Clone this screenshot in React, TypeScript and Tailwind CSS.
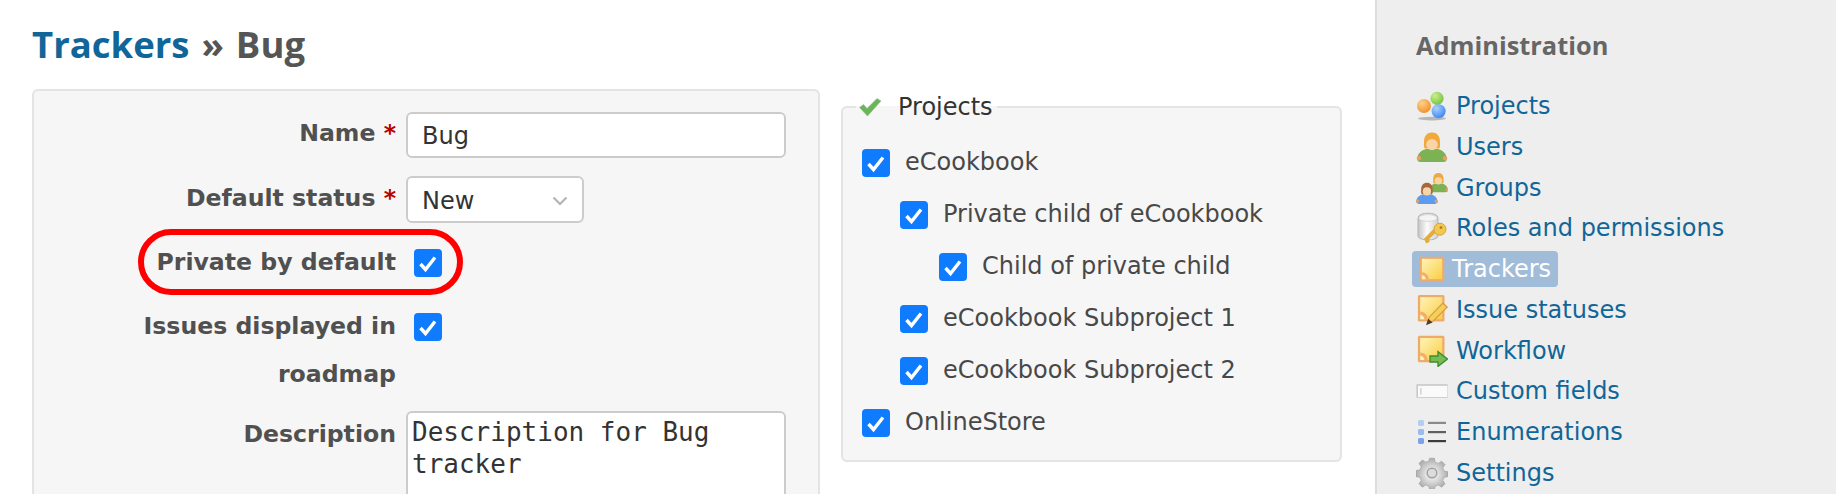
const SANS = "font-['DejaVu_Sans',Verdana,sans-serif]";

function Defs() {
  return (
    <svg width="0" height="0" className="absolute">
      <defs>
        <radialGradient id="ballOrange" cx="35%" cy="30%" r="75%">
          <stop offset="0" stopColor="#ffd08a" />
          <stop offset="1" stopColor="#f0912a" />
        </radialGradient>
        <radialGradient id="ballGreen" cx="35%" cy="30%" r="75%">
          <stop offset="0" stopColor="#c8f08a" />
          <stop offset="1" stopColor="#78c042" />
        </radialGradient>
        <radialGradient id="ballBlue" cx="35%" cy="30%" r="75%">
          <stop offset="0" stopColor="#a8d0ff" />
          <stop offset="1" stopColor="#3f87ee" />
        </radialGradient>
        <linearGradient id="note" x1="0" y1="0" x2="1" y2="1">
          <stop offset="0" stopColor="#fff3b8" />
          <stop offset="1" stopColor="#f8cf45" />
        </linearGradient>
        <linearGradient id="can" x1="0" y1="0" x2="1" y2="0">
          <stop offset="0" stopColor="#c4c4c4" />
          <stop offset="0.45" stopColor="#fbfbfb" />
          <stop offset="1" stopColor="#cfcfcf" />
        </linearGradient>
        <radialGradient id="gear" cx="50%" cy="50%" r="55%">
          <stop offset="0.3" stopColor="#e6e6e6" />
          <stop offset="1" stopColor="#a4a4a4" />
        </radialGradient>
      </defs>
    </svg>
  );
}

function Person({ x, y, hair, body, s = 1 }: { x: number; y: number; hair: string; body: string; s?: number }) {
  return (
    <g transform={`translate(${x} ${y}) scale(${s})`}>
      <path d="M0.6 14.2C0.6 10.8 3.4 9.4 5 9h6c1.6.4 4.4 1.800 4.400 5.200 0 .8-1 1.300-2 1.300H2.600c-1 0-2-.5-2-1.300z" fill={body} />
      <circle cx="1.500" cy="13.600" r="1.100" fill="#e8a060" />
      <circle cx="14.500" cy="13.600" r="1.100" fill="#e8a060" />
      <path d="M4 5.500C4 2.400 5.600.8 8 .8s4 1.600 4 4.700c0 1.500.2 2.500-.4 3.300H4.400c-.6-.8-.4-1.800-.4-3.300z" fill={hair} />
      <ellipse cx="8" cy="6.800" rx="2.900" ry="2.800" fill="#f8d4a8" />
    </g>
  );
}

function NoteBase({ x = 0, y = 0, s = 1 }: { x?: number; y?: number; s?: number }) {
  return (
    <g transform={`translate(${x} ${y}) scale(${s})`}>
      <rect x="1" y="1" width="14" height="14" rx="0.800" fill="#f0aa68" />
      <rect x="2.200" y="2.200" width="11.600" height="11.600" fill="url(#note)" />
      <path d="M2.200 9.800c2.300.1 3.900 1.600 4 4H2.200z" fill="#f4ae68" />
      <path d="M2.200 11.600c1.200 0 2.100.9 2.200 2.200H2.200z" fill="#fff1c4" />
    </g>
  );
}

function NavIcon({ name }: { name: string }) {
  const box = "w-8 h-8 shrink-0 blur-[0.4px]";
  if (name === "projects")
    return (
      <svg viewBox="0 0 16 16" className={box}>
        <ellipse cx="8" cy="14.300" rx="7" ry="0.900" fill="#8a8a8a" opacity="0.550" />
        <circle cx="10.500" cy="4.200" r="3.300" fill="url(#ballGreen)" />
        <circle cx="4" cy="8" r="3.500" fill="url(#ballOrange)" />
        <circle cx="11.300" cy="10.600" r="3.500" fill="url(#ballBlue)" />
      </svg>
    );
  if (name === "users")
    return (
      <svg viewBox="0 0 16 16" className={box}>
        <Person x={0} y={0} hair="#f2a93c" body="#7cb254" />
      </svg>
    );
  if (name === "groups")
    return (
      <svg viewBox="0 0 16 16" className={box}>
        <Person x={6} y={0} hair="#eeaa40" body="#7cb254" s={0.650} />
        <Person x={-0.300} y={4.800} hair="#a8683c" body="#5c9cee" s={0.720} />
      </svg>
    );
  if (name === "roles")
    return (
      <svg viewBox="0 0 16 16" className={box}>
        <path d="M1 3c0-3.200 10-3.200 10 0v9c0 2.600-10 2.600-10 0z" fill="url(#can)" stroke="#b4b4b4" strokeWidth="0.500" />
        <ellipse cx="6" cy="3" rx="4.600" ry="1.700" fill="#f4f4f4" stroke="#c4c4c4" strokeWidth="0.300" />
        <path d="M6 15.300l-.8-1.700 4.200-4.300" stroke="#e2ab3a" strokeWidth="2" fill="none" />
        <circle cx="12" cy="8.600" r="3" fill="#f2c84e" stroke="#dda235" strokeWidth="0.500" />
        <circle cx="12.500" cy="7.800" r="0.700" fill="#a87d2c" />
      </svg>
    );
  if (name === "trackers")
    return (
      <svg viewBox="0 0 16 16" className="h-7 w-7 shrink-0 blur-[0.4px]">
        <NoteBase />
      </svg>
    );
  if (name === "statuses")
    return (
      <svg viewBox="0 0 16 16" className={box}>
        <NoteBase x={0} y={-0.500} s={0.950} />
        <path d="M5.800 14.600l.8-3 6.800-7 2.200 2-7 6.900z" fill="#f6cf58" stroke="#d89a4a" strokeWidth="0.600" />
        <path d="M5 15.600l1.100-3.200 2.200 1.800z" fill="#5b3b1c" />
      </svg>
    );
  if (name === "workflow")
    return (
      <svg viewBox="0 0 16 16" className={box}>
        <NoteBase x={0} y={-0.600} s={0.950} />
        <path d="M7 10.500h4V8.300l4.700 3.700-4.700 3.700v-2.200H7z" fill="#77bb55" stroke="#3f8f2e" strokeWidth="0.700" />
      </svg>
    );
  if (name === "fields")
    return (
      <svg viewBox="0 0 16 16" className={box}>
        <rect x="0.200" y="4.600" width="15.600" height="6.800" fill="#c8c8c8" />
        <rect x="1" y="5.400" width="14.600" height="5.600" fill="#fafafa" />
        <rect x="2.200" y="6.400" width="0.500" height="3.400" fill="#c0c0c0" />
      </svg>
    );
  if (name === "enumerations")
    return (
      <svg viewBox="0 0 16 16" className={box}>
        <rect x="1" y="2" width="3" height="3" rx="0.700" fill="#b4cdf2" />
        <rect x="1" y="6.500" width="3" height="3" rx="0.700" fill="#99bbee" />
        <rect x="1" y="11" width="3" height="3" rx="0.700" fill="#7aa4ea" />
        <rect x="6" y="2.900" width="9" height="1.100" fill="#8a8a8a" />
        <rect x="6" y="7.500" width="9" height="1.100" fill="#606060" />
        <rect x="6" y="12" width="9" height="1.100" fill="#3c3c3c" />
      </svg>
    );
  return (
    <svg viewBox="0 0 16 16" className={box}>
      <path
        fill="url(#gear)"
        stroke="#9c9c9c"
        strokeWidth="0.300"
        d="M6.800.6h2.400l.4 2 1.500.6 1.700-1.100 1.700 1.700-1.100 1.700.6 1.500 2 .4v2.400l-2 .4-.6 1.500 1.100 1.700-1.700 1.700-1.700-1.100-1.500.6-.4 2H6.800l-.4-2-1.500-.6-1.700 1.100-1.700-1.700 1.100-1.700-.6-1.500-2-.4V6.800l2-.4.6-1.500-1.100-1.700 1.700-1.700 1.700 1.100 1.500-.6z"
      />
      <circle cx="8" cy="8" r="2.400" fill="#dcdcdc" stroke="#a0a0a0" strokeWidth="0.700" />
    </svg>
  );
}

function CheckBox() {
  return (
    <span className="flex h-7 w-7 shrink-0 items-center justify-center rounded-[4px] bg-[#0f7bff]">
      <svg viewBox="0 0 28 28" className="h-7 w-7">
        <path d="M6.500 15l5 5.500L21 8.500" fill="none" stroke="#fff" strokeWidth="3.400" />
      </svg>
    </span>
  );
}

function Asterisk() {
  return <span className="text-[#bb0000]"> *</span>;
}

const TREE = [
  { name: "eCookbook", indent: "ml-0" },
  { name: "Private child of eCookbook", indent: "ml-[38px]" },
  { name: "Child of private child", indent: "ml-[77px]" },
  { name: "eCookbook Subproject 1", indent: "ml-[38px]" },
  { name: "eCookbook Subproject 2", indent: "ml-[38px]" },
  { name: "OnlineStore", indent: "ml-0" },
];

const NAV = [
  { id: "projects", label: "Projects" },
  { id: "users", label: "Users" },
  { id: "groups", label: "Groups" },
  { id: "roles", label: "Roles and permissions" },
  { id: "trackers", label: "Trackers" },
  { id: "statuses", label: "Issue statuses" },
  { id: "workflow", label: "Workflow" },
  { id: "fields", label: "Custom fields" },
  { id: "enumerations", label: "Enumerations" },
  { id: "settings", label: "Settings" },
];

export default function App() {
  return (
    <div className={`flex h-[494px] w-[1836px] overflow-hidden bg-white text-[24px] text-[#484848] ${SANS}`}>
      <Defs />
      <main className="w-[1375px] shrink-0 pl-8 pt-[18px]">
        <h2 className="font-['Open_Sans',sans-serif] text-[36.5px] font-bold leading-[52px] text-[#555555] [word-spacing:2.500px]">
          <a className="text-[#116699]">Trackers</a> » Bug
        </h2>

        <div className="mt-[19px] flex items-start">
          {/* Main form */}
          <div className="h-[420px] w-[788px] shrink-0 rounded-t-[6px] border-2 border-b-0 border-[#e4e4e4] bg-[#f6f6f6] pt-[18px] text-[23.6px] font-bold text-[#505050]">
            <div className="flex items-start">
              <label className="w-[362px] shrink-0 text-right leading-[48px]">
                Name
                <Asterisk />
              </label>
              <div className="ml-[10px] mt-[3px] flex h-[46px] w-[380px] items-center rounded-[6px] border-2 border-[#cccccc] bg-white pl-[14px] pt-[2px] text-[24px] font-normal text-[#333333]">
                Bug
              </div>
            </div>

            <div className="mt-4 flex items-start">
              <label className="w-[362px] shrink-0 text-right leading-[48px]">
                Default status
                <Asterisk />
              </label>
              <div className="ml-[10px] mt-[2px] flex h-[47px] w-[178px] items-center justify-between rounded-[6px] border-2 border-[#cccccc] bg-white pl-[14px] pr-[14px] pt-[2px] text-[24px] font-normal text-[#333333]">
                New
                <svg viewBox="0 0 16 10" className="h-[10px] w-4">
                  <path d="M1.500 1.500L8 8l6.500-6.500" fill="none" stroke="#b4b4b4" strokeWidth="2.200" />
                </svg>
              </div>
            </div>

            <div className="relative mt-4 flex items-start">
              <label className="w-[362px] shrink-0 pb-[2px] text-right leading-[46px]">Private by default</label>
              <div className="ml-[18px] mt-[10px]">
                <CheckBox />
              </div>
              {/* Red ring drawn over the screenshot */}
              <span className="pointer-events-none absolute left-[104px] top-[-10px] h-[66px] w-[325px] rounded-[33px] border-[6px] border-[#ff0000]" />
            </div>

            <div className="mt-[15px] flex items-start">
              <label className="w-[362px] shrink-0 text-right leading-[48px]">
                Issues displayed in
                <br />
                roadmap
              </label>
              <div className="ml-[18px] mt-[11px]">
                <CheckBox />
              </div>
            </div>

            <div className="mt-3 flex items-start">
              <label className="w-[362px] shrink-0 text-right leading-[48px]">Description</label>
              <div className="ml-[10px] mt-[1px] h-[120px] w-[380px] rounded-[6px] border-2 border-[#cccccc] bg-white px-1 pt-[3px] font-['DejaVu_Sans_Mono',monospace] text-[26px] font-normal leading-[32px] text-[#333333]">
                Description for Bug
                <br />
                tracker
              </div>
            </div>
          </div>

          {/* Projects fieldset */}
          <fieldset className="ml-[21px] mt-[3px] h-[370px] w-[501px] rounded-[6px] border-2 border-[#e4e4e4] bg-[#f6f6f6] pl-[19px]">
            <legend className="-ml-[6px] flex h-[30px] items-center pl-[2px] pr-1 text-[#333333]">
              <svg viewBox="0 0 24 20" className="h-5 w-6 blur-[0.4px]">
                <path d="M1.500 10.500l4-3 3.500 4L19 1.500l4 2.500L9.500 19z" fill="#6cb35c" stroke="#88c57a" strokeWidth="0.600" />
              </svg>
              <span className="ml-4">Projects</span>
            </legend>
            <ul className="mt-[27px] flex flex-col gap-6">
              {TREE.map((p) => (
                <li key={p.name} className={`flex h-7 items-center gap-[15px] ${p.indent}`}>
                  <CheckBox />
                  <span className="pb-[2px]">{p.name}</span>
                </li>
              ))}
            </ul>
          </fieldset>
        </div>
      </main>

      {/* Sidebar */}
      <aside className="flex-1 border-l-2 border-[#dddddd] bg-[#eeeeee] pl-[39px] pt-[27px]">
        <h3 className="font-['Open_Sans',sans-serif] text-[25.4px] font-bold leading-9 text-[#666666]">Administration</h3>
        <ul className="mt-[25px] flex flex-col gap-[4.75px] text-[#116699]">
          {NAV.map((item) =>
            item.id === "trackers" ? (
              <li key={item.id} className="-ml-1 flex h-9 w-[146px] items-center gap-[6px] rounded-[4px] bg-[#a0bcd9] pl-[6px] text-white">
                <NavIcon name={item.id} />
                <a>{item.label}</a>
              </li>
            ) : (
              <li key={item.id} className="flex h-9 items-center gap-2">
                <NavIcon name={item.id} />
                <a>{item.label}</a>
              </li>
            ),
          )}
        </ul>
      </aside>
    </div>
  );
}
